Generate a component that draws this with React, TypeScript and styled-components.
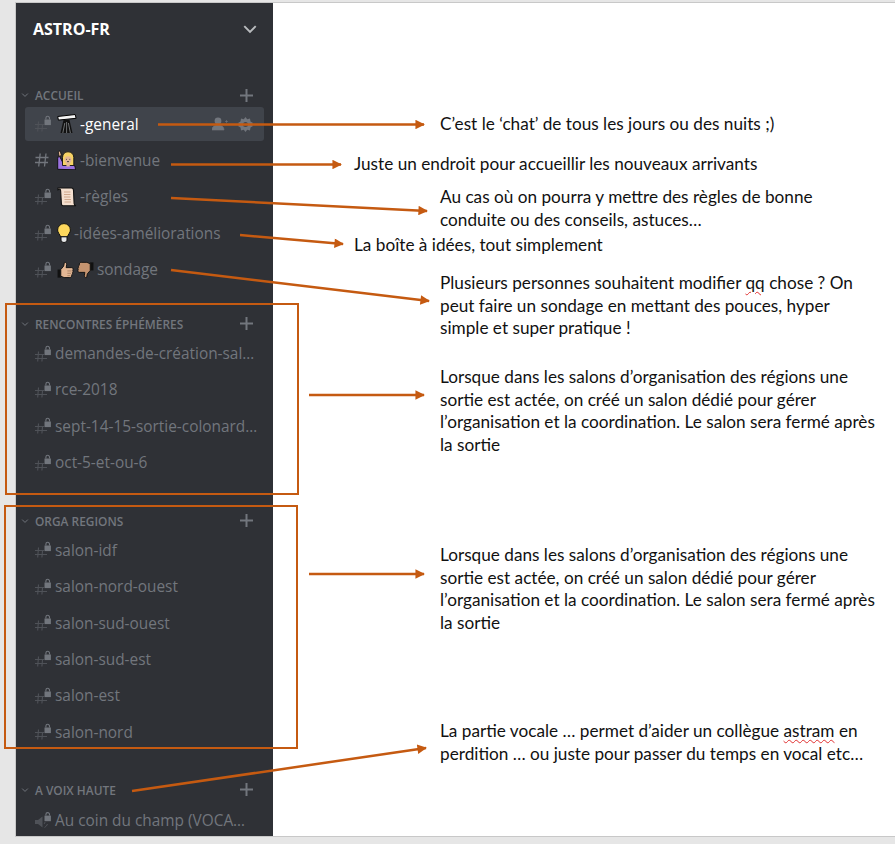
import * as React from 'react'
import styled, { createGlobalStyle } from 'styled-components'

const GlobalStyle = createGlobalStyle`
  html, body {
    margin: 0;
    padding: 0;
    background: #e6e6e6;
  }
`

const HashLock = () => (
  <svg width="20" height="20" viewBox="0 0 20 20" fill="none">
    <g stroke="#4f5258" strokeWidth="1.100">
      <path d="M0 10.500h9M0 14.500h12M3.500 7.500l-.8 10M7.500 11l-.6 6.500" />
    </g>
    <path d="M9.500 5.500h6.400v5.600H9.500z" fill="#72767d" />
    <path d="M10.900 5.500V4.100a1.800 1.800 0 0 1 3.600 0v1.400" stroke="#72767d" strokeWidth="1.100" />
  </svg>
)

const Hash = () => (
  <svg width="20" height="20" viewBox="0 0 20 20" fill="none">
    <path d="M.5 7.500h13M0 12.500h13M5.200 3.500l-1.500 13M11 3.500l-1.500 13" stroke="#72767d" strokeWidth="1.300" />
  </svg>
)

const SpeakerLock = () => (
  <svg width="20" height="20" viewBox="0 0 20 20" fill="none">
    <path d="M0 9h3l4.500-3.500v11L3 13H0z" fill="#4f5258" />
    <path d="M9 13a3 3 0 0 0 1-2M9.500 16.500a6 6 0 0 0 3-3.500" stroke="#4f5258" strokeWidth="1" />
    <path d="M9.500 4.600h6.400v5.600H9.500z" fill="#72767d" />
    <path d="M10.900 4.600V3.400a1.800 1.800 0 0 1 3.600 0v1.200" stroke="#72767d" strokeWidth="1.100" />
  </svg>
)

const Telescope = () => (
  <svg width="20" height="20" viewBox="0 0 20 20">
    <path d="M.7 2.500l17.500-2 .9 3.800-17.700 1.800z" fill="#f4f4f4" stroke="#000" strokeWidth="1" />
    <path d="M6.500 6h6l3 13h-12z" fill="#111" />
    <path d="M7.800 9l-2 10M11.400 9l2 10M9.600 8v11" stroke="#77797c" strokeWidth=".9" />
  </svg>
)

const RaisingHand = () => (
  <svg width="20" height="20" viewBox="0 0 20 20">
    <path d="M.7 19.300V8.500L1.800 5l2.200 4 2.500 5 7 .5 4.500 1.500.5 3.800z" fill="#9b72e0" stroke="#111" strokeWidth="1" />
    <path d="M1.300 1.500l1.800-.6 1.400 4.500-2.600 1z" fill="#e3b795" stroke="#111" strokeWidth=".8" />
    <path d="M5.500 15.500V7.500C5.500 3.800 8 1.800 11 1.800s5.800 2 5.800 5.700v8z" fill="#f6d365" stroke="#111" strokeWidth=".9" />
    <circle cx="11" cy="9.800" r="3.500" fill="#e3b795" />
    <path d="M9.400 13h3.400v3.500H9.400z" fill="#e3b795" />
    <path d="M9 9.400h.8M12.400 9.400h.8M10 11.600h2" stroke="#333" strokeWidth=".9" />
  </svg>
)

const Scroll = () => (
  <svg width="20" height="20" viewBox="0 0 20 20">
    <path d="M1 1h13.500c1.500 0 2 1 2 2.500l.6 13c0 1.500 1 2 1.900 2.200H6c-1.200 0-1.600-1-1.600-2.200L3.600 3.500C3.500 2.200 2.500 1.800 1 2.800z" fill="#f4dfcf" stroke="#111" strokeWidth="1.100" />
    <path d="M7 5h6.500M7 7.500h6.500M7 10h6.500M7.500 12.500h6.500M7.500 15h6.500" stroke="#cfa88d" strokeWidth="1" />
  </svg>
)

const Bulb = () => (
  <svg width="14" height="20" viewBox="0 0 14 20">
    <path d="M7 .6a6.400 6.400 0 0 1 6.400 6.400c0 2.600-2.200 4.300-3 6.800H3.600c-.8-2.500-3-4.200-3-6.800A6.400 6.400 0 0 1 7 .6z" fill="#fdd85d" stroke="#111" strokeWidth="1" />
    <path d="M4 13.800h6v3.400l-1.500 2.200h-3L4 17.200z" fill="#e6e7e8" stroke="#111" strokeWidth="1" />
  </svg>
)

const ThumbUp = () => (
  <svg width="17" height="18" viewBox="0 0 18 18">
    <path d="M.6 8.500h3.500v8.600H.6z" fill="#111" />
    <path d="M4 8.500l3-3.500.8-4c1.500-.5 2.600.8 2.400 2.400L9.700 6.500h5.800c1.700 0 1.900 2 1.200 2.800.6 1 .3 2-.4 2.500.4 1 0 1.900-.7 2.300.2 1.400-.6 2.900-2 2.900H7.500L4 15.600z" fill="#e3b795" stroke="#111" strokeWidth="1" />
    <path d="M11 10h4.500M11 12.500h4M11 15h3" stroke="#8f6a50" strokeWidth=".7" />
  </svg>
)

const ThumbDown = () => (
  <svg width="17" height="18" viewBox="0 0 18 18">
    <path d="M17.400 9.500h-3.500V.9h3.500z" fill="#111" />
    <path d="M14 9.500l-3 3.500-.8 4c-1.500.5-2.600-.8-2.400-2.400l.5-3.100H2.500c-1.700 0-1.900-2-1.200-2.800-.6-1-.3-2 .4-2.500-.4-1 0-1.900.7-2.300C2.200 2 3 .9 4.400.9h6.100L14 2.400z" fill="#c4936f" stroke="#111" strokeWidth="1" />
  </svg>
)

const Chevron = ({ size = 14, color = '#b9bbbe' }: { size?: number; color?: string }) => (
  <svg width={size} height={size} viewBox="0 0 14 14" fill="none">
    <path d="M2 4.500l5 5 5-5" stroke={color} strokeWidth="1.700" />
  </svg>
)

const Plus = () => (
  <svg width="13" height="13" viewBox="0 0 13 13">
    <path d="M0 6.500h13M6.500 0v13" stroke="#72767d" strokeWidth="2" fill="none" />
  </svg>
)

type Row = { name: string; icon?: 'hash' | 'voice'; emoji?: React.ReactNode; active?: boolean }

const groups: { title: string; top: number; gap: number; rows: Row[] }[] = [
  {
    title: 'ACCUEIL',
    top: 0,
    gap: 2,
    rows: [
      { name: '-general', emoji: <Telescope />, active: true },
      { name: '-bienvenue', icon: 'hash', emoji: <RaisingHand /> },
      { name: '-règles', emoji: <Scroll /> },
      { name: '-idées-améliorations', emoji: <Bulb /> },
      { name: 'sondage', emoji: <><ThumbUp /><ThumbDown /></> },
    ],
  },
  {
    title: 'RENCONTRES ÉPHÉMÈRES',
    top: 27,
    gap: 3,
    rows: [
      { name: 'demandes-de-création-sal…' },
      { name: 'rce-2018' },
      { name: 'sept-14-15-sortie-colonard…' },
      { name: 'oct-5-et-ou-6' },
    ],
  },
  {
    title: 'ORGA REGIONS',
    top: 31,
    gap: 2.5,
    rows: [
      { name: 'salon-idf' },
      { name: 'salon-nord-ouest' },
      { name: 'salon-sud-ouest' },
      { name: 'salon-sud-est' },
      { name: 'salon-est' },
      { name: 'salon-nord' },
    ],
  },
  {
    title: 'A VOIX HAUTE',
    top: 30.5,
    gap: 4,
    rows: [{ name: 'Au coin du champ (VOCA…', icon: 'voice' }],
  },
]

const Spell = styled.span`
  text-decoration: underline wavy #e03030 1px;
  text-underline-offset: 2px;
`

const notes: { x: number; y: number; body: React.ReactNode }[] = [
  { x: 440, y: 113, body: 'C’est le ‘chat’ de tous les jours ou des nuits ;)' },
  { x: 354, y: 153, body: 'Juste un endroit pour accueillir les nouveaux arrivants' },
  { x: 440, y: 186, body: <>Au cas où on pourra y mettre des règles de bonne<br />conduite ou des conseils, astuces…</> },
  { x: 354, y: 234, body: 'La boîte à idées, tout simplement' },
  { x: 440, y: 272, body: <>Plusieurs personnes souhaitent modifier <Spell>qq</Spell> chose ? On<br />peut faire un sondage en mettant des pouces, hyper<br />simple et super pratique !</> },
  { x: 440, y: 366, body: <>Lorsque dans les salons d’organisation des régions une<br />sortie est actée, on créé un salon dédié pour gérer<br />l’organisation et la coordination. Le salon sera fermé après<br />la sortie</> },
  { x: 440, y: 544, body: <>Lorsque dans les salons d’organisation des régions une<br />sortie est actée, on créé un salon dédié pour gérer<br />l’organisation et la coordination. Le salon sera fermé après<br />la sortie</> },
  { x: 440, y: 720, body: <>La partie vocale … permet d’aider un collègue <Spell>astram</Spell> en<br />perdition … ou juste pour passer du temps en vocal etc…</> },
]

const arrows = [
  [158, 124.5, 424, 124.5],
  [171, 164.5, 341, 164.5],
  [171, 198, 427, 211],
  [240, 235, 343, 244],
  [171, 270, 429, 301],
  [309, 395, 424, 395],
  [309, 574, 424, 574],
  [132, 791, 426, 748],
]

export default function App() {
  return (
    <>
      <GlobalStyle />
      <Page>
        <Slide>
          <Sidebar>
            <Header>
              <ServerName>ASTRO-FR</ServerName>
              <Chevron size={16} />
            </Header>
            {groups.map(group => (
              <Group key={group.title} $top={group.top}>
                <GroupHead $gap={group.gap}>
                  <Chevron size={8} color="#72767d" />
                  <GroupTitle>{group.title}</GroupTitle>
                  <Plus />
                </GroupHead>
                <Channels>
                  {group.rows.map(row => (
                    <Channel key={row.name} $active={row.active}>
                      <ChannelIcon>
                        {row.icon === 'hash' ? <Hash /> : row.icon === 'voice' ? <SpeakerLock /> : <HashLock />}
                      </ChannelIcon>
                      {row.emoji && <Emoji>{row.emoji}</Emoji>}
                      <ChannelName $active={row.active}>{row.name}</ChannelName>
                      {row.active && (
                        <Tools>
                          <svg width="16" height="14" viewBox="0 0 16 14">
                            <circle cx="6" cy="4" r="3.400" fill="#72767d" />
                            <path d="M0 13c0-3.500 2.500-5 6-5s6 1.500 6 5zM13 4.500h3M14.500 3v3" fill="#72767d" stroke="#72767d" strokeWidth=".6" />
                          </svg>
                          <svg width="15" height="15" viewBox="0 0 15 15">
                            <path d="M7.500 0l1.700 2.200 2.800-.6.500 2.800 2.500 1.500-1.400 1.600 1.400 1.600-2.500 1.500-.5 2.800-2.800-.6L7.500 15l-1.700-2.200-2.800.6-.5-2.800L0 9.100l1.400-1.600L0 5.900l2.500-1.500.5-2.800 2.800.6z" fill="#72767d" />
                            <circle cx="7.500" cy="7.500" r="2.500" fill="#40444b" />
                          </svg>
                        </Tools>
                      )}
                    </Channel>
                  ))}
                </Channels>
              </Group>
            ))}
          </Sidebar>
        </Slide>
        {notes.map(note => (
          <Note key={note.y} $x={note.x} $y={note.y}>{note.body}</Note>
        ))}
        <Frame $x={5} $y={303} $w={294} $h={192} />
        <Frame $x={4} $y={505} $w={294} $h={244} />
        <Overlay width="895" height="844">
          <defs>
            <marker id="head" viewBox="0 0 10 10" refX="9" refY="5" markerWidth="4.500" markerHeight="3.800" orient="auto">
              <path d="M0 0L10 5L0 10z" fill="#c55a11" />
            </marker>
          </defs>
          {arrows.map(([x1, y1, x2, y2]) => (
            <line key={`${x1}-${y1}`} x1={x1} y1={y1} x2={x2} y2={y2} stroke="#c55a11" strokeWidth="2.500" markerEnd="url(#head)" />
          ))}
        </Overlay>
      </Page>
    </>
  )
}

const Page = styled.div`
  position: relative;
  width: 895px;
  height: 844px;
  overflow: hidden;
  background: #e6e6e6;
`

const Slide = styled.div`
  margin: 2px 0 0 15px;
  width: 880px;
  height: 835px;
  box-sizing: border-box;
  background: #fff;
  border-top: 1px solid #c8c8c8;
  border-left: 1px solid #c8c8c8;
  border-bottom: 1px solid #c8c8c8;
  display: flex;
`

const Sidebar = styled.aside`
  width: 257px;
  height: 100%;
  overflow: hidden;
  background: #2f3136;
  font-family: "Open Sans", "Noto Sans", sans-serif;
`

const Header = styled.header`
  height: 52px;
  margin-bottom: 30px;
  padding: 0 15px 0 17px;
  display: flex;
  align-items: center;
  justify-content: space-between;
`

const ServerName = styled.h1`
  margin: 0;
  font-size: 16px;
  font-weight: 700;
  color: #fff;
`

const Group = styled.section<{ $top: number }>`
  margin-top: ${p => p.$top}px;
`

const GroupHead = styled.div<{ $gap: number }>`
  height: 20px;
  padding: 0 20px 0 5px;
  margin-bottom: ${p => p.$gap}px;
  display: flex;
  align-items: center;
  gap: 6px;
`

const GroupTitle = styled.h2`
  flex: 1;
  margin: 0;
  font-size: 11.900px;
  font-weight: 600;
  color: #72767d;
`

const Channels = styled.div`
  display: grid;
  grid-auto-rows: 34px;
  row-gap: 2.400px;
`

const Channel = styled.div<{ $active?: boolean }>`
  width: 239px;
  margin-left: 9px;
  box-sizing: border-box;
  padding: 0 11px 0 10px;
  display: flex;
  align-items: center;
  border-radius: 3px;
  background: ${p => (p.$active ? '#40444b' : 'transparent')};
`

const ChannelIcon = styled.span`
  flex: none;
  width: 20px;
  height: 20px;
  display: flex;
`

const Emoji = styled.span`
  flex: none;
  display: flex;
  align-items: center;
  gap: 3px;
  margin-left: 2px;
  margin-right: 3px;
`

const ChannelName = styled.span<{ $active?: boolean }>`
  flex: 1;
  min-width: 0;
  white-space: nowrap;
  font-size: 15.400px;
  font-weight: 500;
  color: ${p => (p.$active ? '#fff' : '#72767d')};
`

const Tools = styled.span`
  flex: none;
  display: flex;
  align-items: center;
  gap: 10px;
`

const Note = styled.p<{ $x: number; $y: number }>`
  position: absolute;
  left: ${p => p.$x}px;
  top: ${p => p.$y}px;
  margin: 0;
  font-family: Lato, "Open Sans", sans-serif;
  font-size: 17.200px;
  line-height: 22.600px;
  color: #111;
  white-space: nowrap;
`

const Frame = styled.div<{ $x: number; $y: number; $w: number; $h: number }>`
  position: absolute;
  left: ${p => p.$x}px;
  top: ${p => p.$y}px;
  width: ${p => p.$w}px;
  height: ${p => p.$h}px;
  box-sizing: border-box;
  border: 2px solid #c55a11;
`

const Overlay = styled.svg`
  position: absolute;
  left: 0;
  top: 0;
  pointer-events: none;
`
